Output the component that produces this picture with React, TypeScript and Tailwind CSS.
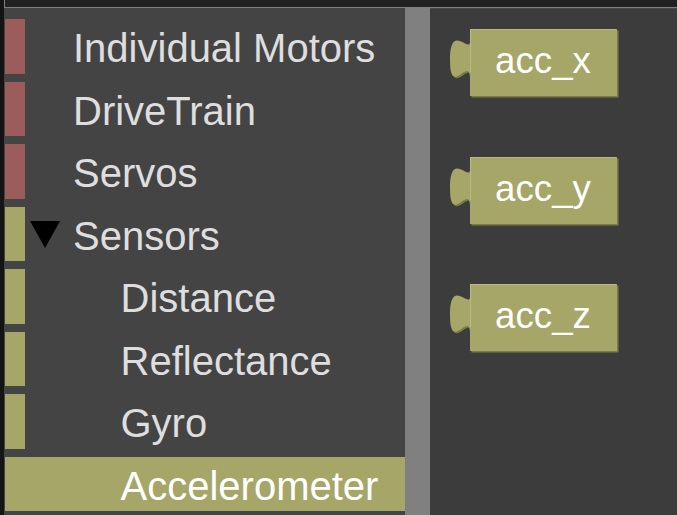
import React from "react";

const RED = "#9c5c5c";
const OLIVE = "#a5a667";

type Row = { label: string; color: string; sub?: boolean; open?: boolean; selected?: boolean };

const rows: Row[] = [
  { label: "Individual Motors", color: RED },
  { label: "DriveTrain", color: RED },
  { label: "Servos", color: RED },
  { label: "Sensors", color: OLIVE, open: true },
  { label: "Distance", color: OLIVE, sub: true },
  { label: "Reflectance", color: OLIVE, sub: true },
  { label: "Gyro", color: OLIVE, sub: true },
  { label: "Accelerometer", color: OLIVE, sub: true, selected: true },
];

const SHAPE = "M 22,2 H 169 V 69 H 22 V 52 c 0,-25 -20,20 -20,-18.75 s 20,-6.25 20,-18.75 Z";

function Block({ label }: { label: string }) {
  return (
    <svg width="176" height="74" viewBox="0 0 176 74" className="block">
      <path d={SHAPE} fill="#7b7c4c" transform="translate(1.5,1.5)" />
      <path d={SHAPE} fill={OLIVE} />
      <path d="M 22.5,45 V 2.5 H 168" fill="none" stroke="#b9ba85" strokeWidth="1" />
      <text
        x="95"
        y="46"
        textAnchor="middle"
        fill="#ffffff"
        style={{ fontFamily: '"Liberation Sans", Arial, sans-serif', fontSize: "36.67px" }}
      >
        {label}
      </text>
    </svg>
  );
}

export default function App() {
  return (
    <div className="flex h-[515px] w-[677px] overflow-hidden bg-[#141414] font-['Liberation_Sans',Arial,sans-serif]">
      <div className="w-[4px] shrink-0 bg-[#141414]" />
      <div className="flex min-w-0 flex-1 flex-col">
        <div className="h-[8px] shrink-0 border-b border-l border-[#7f7f7f] bg-[#212121]" />
        <div className="flex min-h-0 flex-1">
          <div className="w-[401px] shrink-0 bg-[#444444] pt-[11px]">
            {rows.map((r) => (
              <div
                key={r.label}
                className={`ml-[1px] mb-[8px] flex h-[54.5px] items-stretch ${r.selected ? "bg-[#a5a667]" : ""}`}
              >
                <div className="w-[20px] shrink-0" style={{ backgroundColor: r.color }} />
                <div className={`flex shrink-0 items-center ${r.sub ? "w-[95.5px]" : "w-[48px]"}`}>
                  {r.open && (
                    <svg width="30" height="27" viewBox="0 0 30 27" className="ml-[5px] mt-[1px]">
                      <polygon points="0,0 30,0 15,27" fill="#000000" />
                    </svg>
                  )}
                </div>
                <div
                  className={`flex items-center whitespace-nowrap pt-[4px] text-[40px] ${
                    r.selected ? "text-white" : "text-[#dedede]"
                  }`}
                >
                  {r.label}
                </div>
              </div>
            ))}
          </div>
          <div className="w-[25px] shrink-0 bg-[#808080]" />
          <div className="flex min-w-0 flex-1 flex-col gap-[53.5px] border-t border-[#474747] bg-[#3c3c3c] pl-[18px] pt-[18px]">
            <Block label="acc_x" />
            <Block label="acc_y" />
            <Block label="acc_z" />
          </div>
        </div>
      </div>
    </div>
  );
}
